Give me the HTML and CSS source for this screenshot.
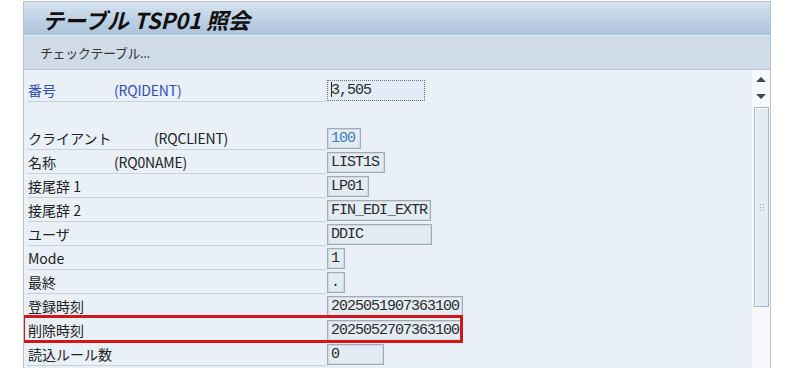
FILE: index.html
```html
<!DOCTYPE html>
<html lang="ja">
<head>
    <meta charset="UTF-8">
    <title>テーブル TSP01 照会</title>
    <link rel="stylesheet" href="styles.css">
</head>
<body>
    <div class="window">
        <div class="titlebar">
            <h1 class="title">テーブル TSP01 照会</h1>
        </div>
        <div class="toolbar">
            <span class="tool">チェックテーブル...</span>
        </div>
        <div class="content">
            <div class="form">
                <div class="row key">
                    <div class="label"><span class="text w86">番号</span><span class="tech">(RQIDENT)</span></div>
                    <div class="field focus" style="width: 91px"><span class="caret"></span>3,505</div>
                </div>
                <div class="row blank"></div>
                <div class="row">
                    <div class="label"><span class="text w126">クライアント</span><span class="tech">(RQCLIENT)</span></div>
                    <div class="field num" style="width: 27px">100</div>
                </div>
                <div class="row">
                    <div class="label"><span class="text w86">名称</span><span class="tech">(RQ0NAME)</span></div>
                    <div class="field" style="width: 51px">LIST1S</div>
                </div>
                <div class="row">
                    <div class="label"><span class="text">接尾辞 1</span></div>
                    <div class="field" style="width: 35px">LP01</div>
                </div>
                <div class="row">
                    <div class="label"><span class="text">接尾辞 2</span></div>
                    <div class="field" style="width: 97px">FIN_EDI_EXTR</div>
                </div>
                <div class="row">
                    <div class="label"><span class="text">ユーザ</span></div>
                    <div class="field" style="width: 98px">DDIC</div>
                </div>
                <div class="row">
                    <div class="label"><span class="text">Mode</span></div>
                    <div class="field" style="width: 11px">1</div>
                </div>
                <div class="row">
                    <div class="label"><span class="text">最終</span></div>
                    <div class="field" style="width: 11px">.</div>
                </div>
                <div class="row">
                    <div class="label"><span class="text">登録時刻</span></div>
                    <div class="field" style="width: 129px">2025051907363100</div>
                </div>
                <div class="row marked">
                    <div class="label"><span class="text">削除時刻</span></div>
                    <div class="field" style="width: 129px">2025052707363100</div>
                    <div class="highlight"></div>
                </div>
                <div class="row">
                    <div class="label"><span class="text">読込ルール数</span></div>
                    <div class="field" style="width: 50px">0</div>
                </div>
            </div>
            <div class="scrollbar">
                <div class="arrow up"></div>
                <div class="arrow down"></div>
                <div class="thumb"><span class="grip"></span></div>
            </div>
        </div>
    </div>
</body>
</html>
```

FILE: styles.css
```css
body {
    margin: 0;
    background-color: #ffffff;
    font-family: "Noto Sans CJK JP", "Noto Sans", sans-serif;
    color: #222222;
}

.window {
    margin-left: 23px;
    margin-top: 1px;
    width: 746px;
    height: 367px;
    border: 1px solid #b7c3cf;
    border-bottom: none;
    display: flex;
    flex-direction: column;
    overflow: hidden;
}

.titlebar {
    height: 33px;
    background: linear-gradient(#d7e3ef, #b9cde1 65%, #adc3da);
    border-bottom: 1px solid #e0e8f1;
    display: flex;
    align-items: center;
}

.title {
    margin: 0 0 0 18px;
    font-size: 22px;
    font-weight: bold;
    font-style: italic;
    letter-spacing: 0;
    color: #111111;
    line-height: 1;
}

.toolbar {
    height: 33px;
    background-color: #cfdce8;
    border-bottom: 1px solid #b9c7d5;
    display: flex;
    align-items: center;
}

.tool {
    margin-left: 16px;
    font-size: 13px;
    color: #333333;
    letter-spacing: -0.4px;
}

.content {
    flex: 1;
    display: flex;
    background-color: #e9f0f7;
}

.form {
    flex: 1;
    padding: 8px 0 0 3px;
}

.row {
    display: flex;
    align-items: flex-end;
    height: 24px;
    position: relative;
}

.label {
    width: 299px;
    height: 23px;
    border-bottom: 1px solid #c9d1d9;
    display: flex;
    align-items: center;
    font-size: 14px;
    padding-left: 1px;
    box-sizing: content-box;
}

.blank {
    height: 24px;
}

.key .label {
    color: #2f4fb4;
}

.text {
    display: inline-block;
    white-space: nowrap;
}

.w86 {
    width: 86px;
}

.w126 {
    width: 126px;
}

.tech {
    letter-spacing: -0.2px;
}

.field {
    height: 19px;
    margin-bottom: 1px;
    border: 1px solid #a2aab3;
    box-shadow: inset 0 0 0 1px #d0d8e0;
    background-color: #e3ecf5;
    font-family: "Liberation Mono", monospace;
    font-size: 15px;
    letter-spacing: -1px;
    line-height: 19px;
    padding-left: 3px;
    padding-right: 2px;
    color: #2b2b2b;
    white-space: nowrap;
    overflow: hidden;
    position: relative;
}

.focus {
    border: 1px dotted #6d747b;
    box-shadow: none;
    background-color: #e1ecf8;
}

.caret {
    display: inline-block;
    width: 1px;
    height: 15px;
    background-color: #222222;
    vertical-align: -3px;
    margin-right: -1px;
}

.num {
    color: #3c7fc0;
}

.highlight {
    position: absolute;
    left: -5px;
    top: -3px;
    width: 435px;
    height: 22px;
    border: 3px solid #d01818;
}

.scrollbar {
    width: 18px;
    background-color: #f6f8fb;
    position: relative;
    display: flex;
    flex-direction: column;
    align-items: center;
    padding-top: 7px;
}

.arrow {
    width: 0;
    height: 0;
    border-left: 5px solid transparent;
    border-right: 5px solid transparent;
}

.up {
    border-bottom: 5px solid #3b4650;
    margin-bottom: 12px;
}

.down {
    border-top: 5px solid #3b4650;
    margin-bottom: 8px;
}

.thumb {
    width: 13px;
    height: 198px;
    border: 1px solid #a8b5c2;
    background-color: #e3ebf4;
    box-shadow: inset 1px 1px 0 #f6f9fc;
    display: flex;
    align-items: center;
    justify-content: center;
}

.grip {
    width: 5px;
    height: 8px;
    background: radial-gradient(circle, #a0aab5 40%, transparent 45%) 0 0 / 3px 3px;
}
```
